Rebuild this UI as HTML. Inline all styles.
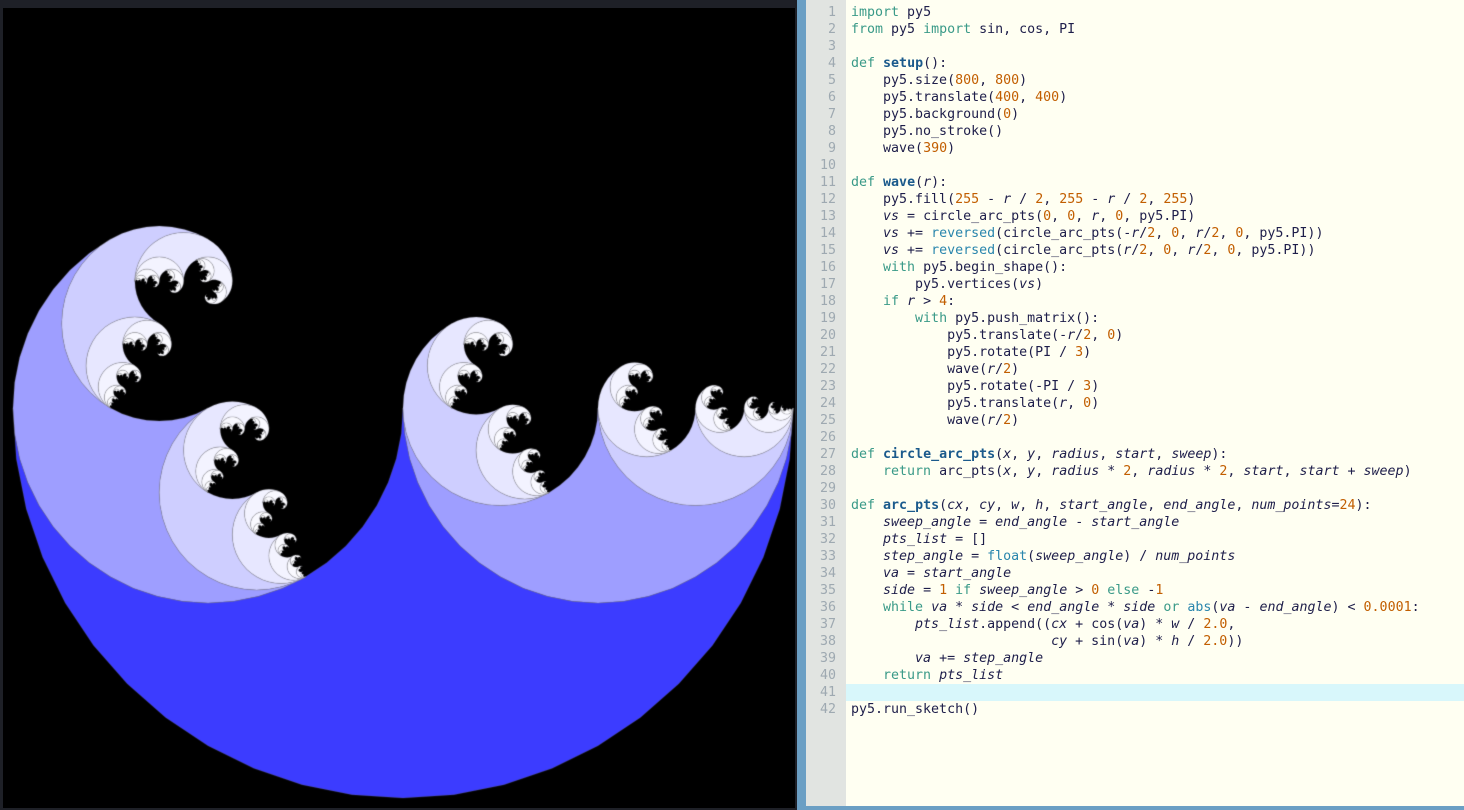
<!DOCTYPE html>
<html><head><meta charset="utf-8"><style>
html,body{margin:0;padding:0;width:1464px;height:810px;overflow:hidden;background:#1e2027}
#left{position:absolute;left:0;top:0;width:797px;height:810px;background:#1e2027}
#clip{position:absolute;left:3px;top:8px;width:792px;height:800px;overflow:hidden;background:#000}
canvas{position:absolute;left:0;top:0}
#frame{position:absolute;left:797px;top:0;width:667px;height:810px;background:#6b9fc4}
#gutter{position:absolute;left:806px;top:0;width:40px;height:806px;background:#e1e4e1}
#code{position:absolute;left:846px;top:0;width:618px;height:806px;background:#fffff2}
#hl{position:absolute;left:846px;top:683.5px;width:618px;height:17px;background:#d8f7fb}
pre{margin:0;font-family:"DejaVu Sans Mono","Liberation Mono",monospace;font-size:13.3px;line-height:17px;position:absolute;top:3.5px}
#nums{left:806px;width:30px;text-align:right;color:#9ea9b1}
#src{left:851px;color:#1e1e4a}
.k{color:#3a9a88}.b{color:#2a86ad}.n{color:#c25e00}.f{color:#1b5a8c;font-weight:bold}.i{font-style:italic}
</style></head><body>
<div id="left"><div id="clip"><canvas id="c" width="800" height="800"></canvas></div></div>
<div id="frame"></div><div id="gutter"></div><div id="code"></div><div id="hl"></div>
<pre id="nums">1
2
3
4
5
6
7
8
9
10
11
12
13
14
15
16
17
18
19
20
21
22
23
24
25
26
27
28
29
30
31
32
33
34
35
36
37
38
39
40
41
42</pre>
<pre id="src"><span class="k">import</span> py5
<span class="k">from</span> py5 <span class="k">import</span> sin, cos, PI

<span class="k">def</span> <span class="f">setup</span>():
    py5.size(<span class="n">800</span>, <span class="n">800</span>)
    py5.translate(<span class="n">400</span>, <span class="n">400</span>)
    py5.background(<span class="n">0</span>)
    py5.no_stroke()
    wave(<span class="n">390</span>)

<span class="k">def</span> <span class="f">wave</span>(<span class="i">r</span>):
    py5.fill(<span class="n">255</span> - <span class="i">r</span> / <span class="n">2</span>, <span class="n">255</span> - <span class="i">r</span> / <span class="n">2</span>, <span class="n">255</span>)
    <span class="i">vs</span> = circle_arc_pts(<span class="n">0</span>, <span class="n">0</span>, <span class="i">r</span>, <span class="n">0</span>, py5.PI)
    <span class="i">vs</span> += <span class="b">reversed</span>(circle_arc_pts(-<span class="i">r</span>/<span class="n">2</span>, <span class="n">0</span>, <span class="i">r</span>/<span class="n">2</span>, <span class="n">0</span>, py5.PI))
    <span class="i">vs</span> += <span class="b">reversed</span>(circle_arc_pts(<span class="i">r</span>/<span class="n">2</span>, <span class="n">0</span>, <span class="i">r</span>/<span class="n">2</span>, <span class="n">0</span>, py5.PI))
    <span class="k">with</span> py5.begin_shape():
        py5.vertices(<span class="i">vs</span>)
    <span class="k">if</span> <span class="i">r</span> &gt; <span class="n">4</span>:
        <span class="k">with</span> py5.push_matrix():
            py5.translate(-<span class="i">r</span>/<span class="n">2</span>, <span class="n">0</span>)
            py5.rotate(PI / <span class="n">3</span>)
            wave(<span class="i">r</span>/<span class="n">2</span>)
            py5.rotate(-PI / <span class="n">3</span>)
            py5.translate(<span class="i">r</span>, <span class="n">0</span>)
            wave(<span class="i">r</span>/<span class="n">2</span>)

<span class="k">def</span> <span class="f">circle_arc_pts</span>(<span class="i">x</span>, <span class="i">y</span>, <span class="i">radius</span>, <span class="i">start</span>, <span class="i">sweep</span>):
    <span class="k">return</span> arc_pts(<span class="i">x</span>, <span class="i">y</span>, <span class="i">radius</span> * <span class="n">2</span>, <span class="i">radius</span> * <span class="n">2</span>, <span class="i">start</span>, <span class="i">start</span> + <span class="i">sweep</span>)

<span class="k">def</span> <span class="f">arc_pts</span>(<span class="i">cx</span>, <span class="i">cy</span>, <span class="i">w</span>, <span class="i">h</span>, <span class="i">start_angle</span>, <span class="i">end_angle</span>, <span class="i">num_points</span>=<span class="n">24</span>):
    <span class="i">sweep_angle</span> = <span class="i">end_angle</span> - <span class="i">start_angle</span>
    <span class="i">pts_list</span> = []
    <span class="i">step_angle</span> = <span class="b">float</span>(<span class="i">sweep_angle</span>) / <span class="i">num_points</span>
    <span class="i">va</span> = <span class="i">start_angle</span>
    <span class="i">side</span> = <span class="n">1</span> <span class="k">if</span> <span class="i">sweep_angle</span> &gt; <span class="n">0</span> <span class="k">else</span> -<span class="n">1</span>
    <span class="k">while</span> <span class="i">va</span> * <span class="i">side</span> &lt; <span class="i">end_angle</span> * <span class="i">side</span> <span class="k">or</span> <span class="b">abs</span>(<span class="i">va</span> - <span class="i">end_angle</span>) &lt; <span class="n">0.0001</span>:
        <span class="i">pts_list</span>.append((<span class="i">cx</span> + cos(<span class="i">va</span>) * <span class="i">w</span> / <span class="n">2.0</span>,
                         <span class="i">cy</span> + sin(<span class="i">va</span>) * <span class="i">h</span> / <span class="n">2.0</span>))
        <span class="i">va</span> += <span class="i">step_angle</span>
    <span class="k">return</span> <span class="i">pts_list</span>

py5.run_sketch()</pre>
<script>
var c=document.getElementById('c').getContext('2d');
c.fillStyle='#000';c.fillRect(0,0,800,800);
function arcPts(cx,cy,w,h,s,e,n){n=n||24;var sw=e-s,p=[],st=sw/n,va=s,side=sw>0?1:-1;
while(va*side<e*side||Math.abs(va-e)<0.0001){p.push([cx+Math.cos(va)*w/2,cy+Math.sin(va)*h/2]);va+=st;}return p;}
function cap(x,y,r,s,sw){return arcPts(x,y,r*2,r*2,s,s+sw);}
function wave(r){
 var g=Math.round(255-r/2);
 c.fillStyle='rgb('+g+','+g+',255)';
 var vs=cap(0,0,r,0,Math.PI);
 vs=vs.concat(cap(-r/2,0,r/2,0,Math.PI).reverse());
 vs=vs.concat(cap(r/2,0,r/2,0,Math.PI).reverse());
 c.beginPath();c.moveTo(vs[0][0],vs[0][1]);
 for(var i=1;i<vs.length;i++)c.lineTo(vs[i][0],vs[i][1]);
 c.closePath();c.fill();
 c.strokeStyle='rgba(120,120,130,0.45)';c.lineWidth=0.5;c.stroke();
 if(r>4){c.save();c.translate(-r/2,0);c.rotate(Math.PI/3);wave(r/2);c.rotate(-Math.PI/3);c.translate(r,0);wave(r/2);c.restore();}
}
c.save();c.translate(400,400);wave(390);c.restore();
</script>
</body></html>
